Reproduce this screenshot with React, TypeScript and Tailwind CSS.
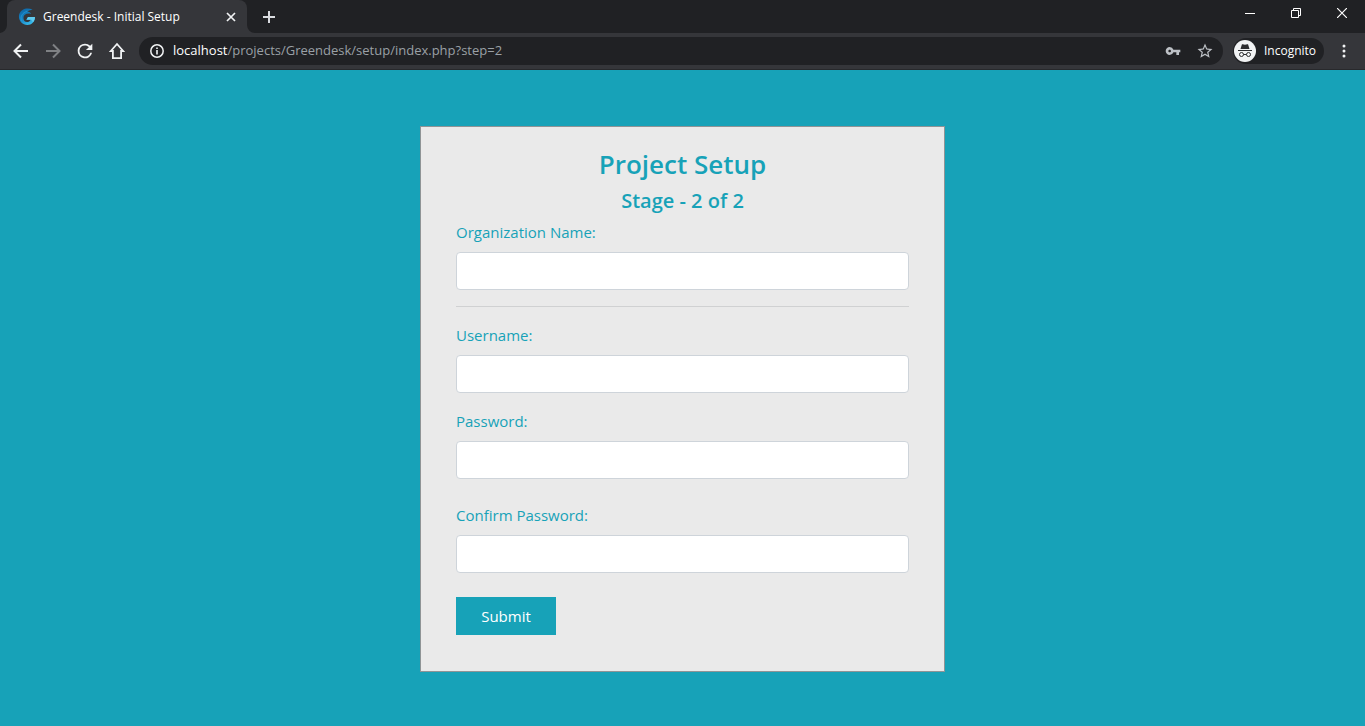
import type { ReactNode } from "react";

type IconButtonProps = { label: string; className?: string; children: ReactNode };

function IconButton({ label, className = "", children }: IconButtonProps) {
  return (
    <button
      type="button"
      aria-label={label}
      className={`flex shrink-0 items-center justify-center ${className}`}
    >
      {children}
    </button>
  );
}

function Favicon() {
  return (
    <svg width="18" height="18" viewBox="0 0 18 18" aria-hidden="true">
      <defs>
        <linearGradient id="swirl" x1="0" y1="0" x2="0.6" y2="1">
          <stop offset="0" stopColor="#0d5f9e" />
          <stop offset="0.55" stopColor="#1583c4" />
          <stop offset="1" stopColor="#35b8ea" />
        </linearGradient>
      </defs>
      <path
        d="M14.5 1.800C10-.8 3 .6 1.200 6.300-.2 12 4 17 9.300 17c4.400 0 7.600-3.400 7.700-8H10l-1.600 2.700h4.200c-.7 1.500-2 2.300-3.600 2.300C6.700 14 5.400 12.200 5.400 9.900 5.400 6.900 8.300 4.800 13.200 5.800 12.500 4.400 11 3.600 9.300 3.400c1.700-.9 3.700-1.400 5.200-1.600z"
        fill="url(#swirl)"
      />
      <path d="M3.500 13C2 8.500 4.500 4.300 9.300 3.400" fill="none" stroke="#2fa3dc" strokeWidth="0.6" />
      <path d="M10 9h7c0 2-.7 3.900-2 5.300l-1.900-2.600H8.400z" fill="#5fc9ee" />
    </svg>
  );
}

function TabStrip() {
  return (
    <div className="flex h-[33px] bg-[#202124] pl-[7px]">
      <div className="relative flex w-60 items-center rounded-t-lg bg-[#35363a] pl-[11px] pr-2">
        <svg className="absolute -left-2 bottom-0" width="8" height="8" aria-hidden="true">
          <path d="M8 0v8H0a8 8 0 0 0 8-8z" fill="#35363a" />
        </svg>
        <svg className="absolute -right-2 bottom-0" width="8" height="8" aria-hidden="true">
          <path d="M0 0v8h8a8 8 0 0 1-8-8z" fill="#35363a" />
        </svg>
        <Favicon />
        <span className="ml-[7px] flex-1 whitespace-nowrap text-[12px] text-white">
          Greendesk - Initial Setup
        </span>
        <IconButton label="Close tab" className="size-4">
          <svg width="16" height="16" viewBox="0 0 16 16" stroke="#f1f3f4" strokeWidth="1.700">
            <path d="M4 4l8 8M12 4l-8 8" />
          </svg>
        </IconButton>
      </div>
      <IconButton label="New tab" className="ml-2 w-7">
        <svg width="12" height="12" viewBox="0 0 12 12" stroke="#dadce0" strokeWidth="2">
          <path d="M6 0v12M0 6h12" />
        </svg>
      </IconButton>
      <div className="ml-auto flex h-[26px]">
        <IconButton label="Minimize" className="w-[46px]">
          <svg width="10" height="10" stroke="#fff">
            <path d="M0 5.500h10" />
          </svg>
        </IconButton>
        <IconButton label="Restore" className="w-[46px]">
          <svg width="10" height="10" fill="none" stroke="#fff">
            <path d="M.5 2.500h7v7h-7zM2.500 2.500v-2h7v7h-2" />
          </svg>
        </IconButton>
        <IconButton label="Close window" className="w-[46px]">
          <svg width="10" height="10" stroke="#fff" strokeWidth="1.200">
            <path d="M0 0l10 10M10 0L0 10" />
          </svg>
        </IconButton>
      </div>
    </div>
  );
}

function IncognitoIcon() {
  return (
    <svg width="22" height="22" viewBox="0 0 22 22" aria-hidden="true">
      <circle cx="11" cy="11" r="11" fill="#f1f3f4" />
      <path d="M6.500 9l1.300-4.300c.1-.4.400-.5.800-.4l2.400.5 2.400-.5c.4-.1.700 0 .8.400L15.500 9z" fill="#2b2c2f" />
      <path d="M4 10h14v1H4z" fill="#2b2c2f" />
      <g fill="none" stroke="#2b2c2f" strokeWidth="1">
        <circle cx="7.500" cy="14.500" r="2" />
        <circle cx="14.500" cy="14.500" r="2" />
        <path d="M9.500 14.500h3" />
      </g>
    </svg>
  );
}

function Toolbar() {
  return (
    <div className="flex h-[37px] items-center border-b border-[#28292c] bg-[#35363a] px-[5px]">
      <IconButton label="Back" className="size-8">
        <svg width="20" height="20" viewBox="0 0 20 20" fill="none" stroke="#f1f3f4" strokeWidth="2">
          <path d="M17 10H4.500M10 3.500L3.500 10l6.500 6.500" />
        </svg>
      </IconButton>
      <IconButton label="Forward" className="size-8">
        <svg width="20" height="20" viewBox="0 0 20 20" fill="none" stroke="#7f8184" strokeWidth="2">
          <path d="M3 10h12.500M10 3.500l6.500 6.500-6.500 6.500" />
        </svg>
      </IconButton>
      <IconButton label="Reload" className="size-8">
        <svg width="22" height="22" viewBox="0 0 24 24" fill="#f1f3f4">
          <path d="M17.650 6.350A7.960 7.960 0 0 0 12 4a8 8 0 1 0 7.730 10h-2.080A6 6 0 1 1 12 6c1.660 0 3.140.69 4.220 1.780L13 11h7V4z" />
        </svg>
      </IconButton>
      <IconButton label="Home" className="size-8">
        <svg width="20" height="20" viewBox="0 0 20 20" fill="none" stroke="#f1f3f4" strokeWidth="1.800">
          <path d="M10 3L3.800 10H5.900v7.200h8.200V10h2.100z" />
        </svg>
      </IconButton>

      <div className="ml-1.5 flex h-7 flex-1 items-center rounded-full bg-[#202124] pl-2.5 pr-0.5">
        <svg width="16" height="16" viewBox="0 0 16 16" fill="none" stroke="#f1f3f4" aria-hidden="true">
          <circle cx="8" cy="8" r="6.200" strokeWidth="1.500" />
          <path d="M8 7v4.500M8 4.500v1.600" strokeWidth="1.600" />
        </svg>
        <div className="ml-2 flex-1 whitespace-nowrap text-[13px] text-[#9aa0a6]">
          <span className="text-white">localhost</span>
          /projects/Greendesk/setup/index.php?step=2
        </div>
        <IconButton label="Saved passwords" className="w-8">
          <svg width="16" height="16" viewBox="0 0 24 24" fill="#bdc1c6">
            <path d="M12.650 10A5.990 5.990 0 0 0 7 6c-3.310 0-6 2.690-6 6s2.690 6 6 6a5.990 5.990 0 0 0 5.650-4H17v4h4v-4h2v-4H12.650zM7 14c-1.100 0-2-.9-2-2s.9-2 2-2 2 .9 2 2-.9 2-2 2z" />
          </svg>
        </IconButton>
        <IconButton label="Bookmark this page" className="w-8">
          <svg width="18" height="18" viewBox="0 0 24 24" fill="#bdc1c6">
            <path d="M22 9.240l-7.190-.62L12 2 9.190 8.630 2 9.240l5.460 4.730L5.820 21 12 17.270 18.180 21l-1.630-7.030L22 9.240zM12 15.400l-3.760 2.270 1-4.280-3.320-2.880 4.380-.38L12 6.100l1.710 4.040 4.380.38-3.320 2.880 1 4.280L12 15.400z" />
          </svg>
        </IconButton>
      </div>

      <button
        type="button"
        className="ml-2.5 flex h-[26px] w-[91px] items-center gap-2 rounded-full bg-[#202124] pl-px text-[12px] text-white"
      >
        <IncognitoIcon />
        Incognito
      </button>
      <IconButton label="Menu" className="ml-1 h-8 w-8">
        <svg width="4" height="14" viewBox="0 0 4 14" fill="#f1f3f4">
          <circle cx="2" cy="2" r="1.500" />
          <circle cx="2" cy="7" r="1.500" />
          <circle cx="2" cy="12" r="1.500" />
        </svg>
      </IconButton>
    </div>
  );
}

type FieldProps = { id: string; label: string; type?: string; className?: string };

function Field({ id, label, type = "text", className = "" }: FieldProps) {
  return (
    <div className={className}>
      <label htmlFor={id} className="mb-2 block text-[15px] leading-6">
        {label}
      </label>
      <input
        id={id}
        name={id}
        type={type}
        className="block h-[38px] w-full rounded border border-[#ced4da] bg-white px-3 text-[#495057] outline-none focus:border-[#17a2b8]"
      />
    </div>
  );
}

export default function App() {
  return (
    <div className="flex min-h-screen flex-col bg-[#17a2b8] font-['Segoe_UI','Open_Sans','Noto_Sans',sans-serif]">
      <header>
        <TabStrip />
        <Toolbar />
      </header>
      <main className="flex flex-1 items-start justify-center px-4 py-14">
        <form
          className="w-full max-w-[525px] border border-[#8f9496] bg-[#eaeaea] px-[35px] pb-9 pt-[21px] text-[#17a2b8]"
          onSubmit={(event) => event.preventDefault()}
        >
          <h1 className="mb-2 text-center text-[26px] font-semibold leading-[33px]">Project Setup</h1>
          <h2 className="mb-[7px] text-center text-[20px] font-semibold leading-6">Stage - 2 of 2</h2>
          <Field id="organization" label="Organization Name:" />
          <hr className="my-4 border-[#d0d1d2]" />
          <Field id="username" label="Username:" className="mb-4" />
          <Field id="password" label="Password:" type="password" className="mb-6" />
          <Field id="confirm-password" label="Confirm Password:" type="password" className="mb-6" />
          <button type="submit" className="block h-[38px] w-[100px] bg-[#17a2b8] text-[15px] text-white">
            Submit
          </button>
        </form>
      </main>
    </div>
  );
}
